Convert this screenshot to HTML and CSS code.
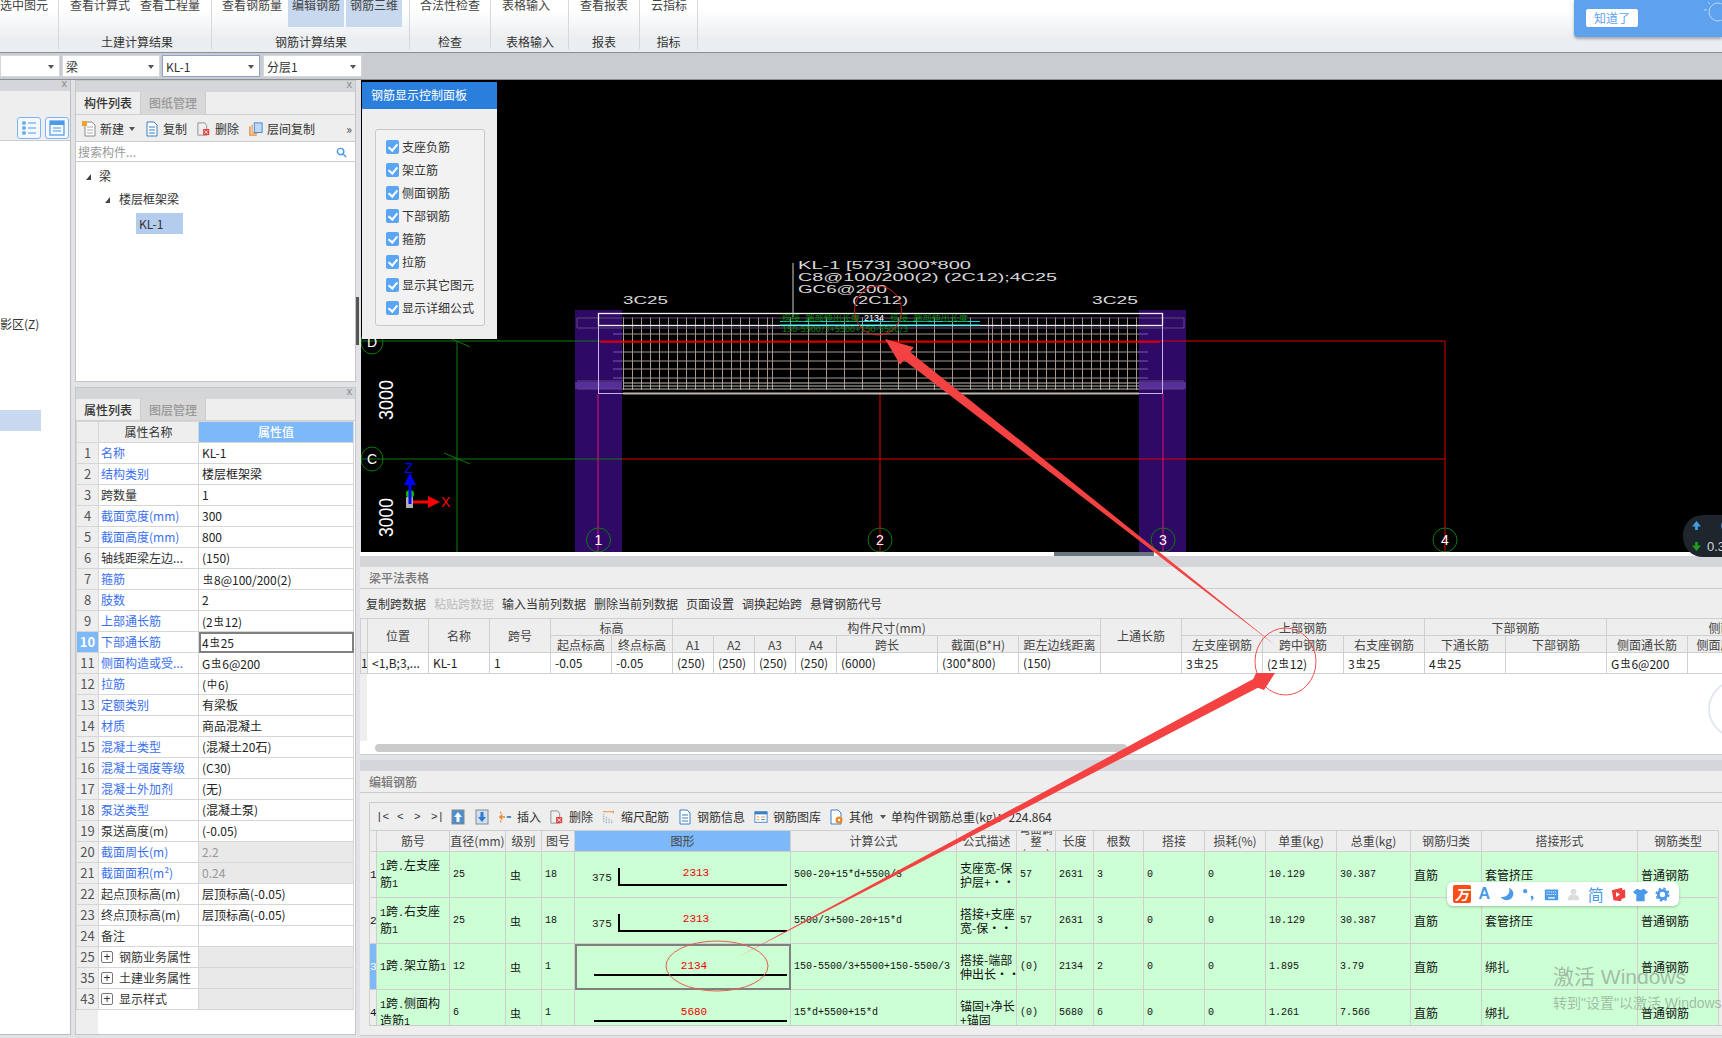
FILE: index.html
```html
<!DOCTYPE html>
<html lang="zh-CN">
<head>
<meta charset="utf-8">
<title>钢筋计算结果</title>
<link rel="stylesheet" href="styles.css">
</head>
<body>
<div class="app">
  <header class="ribbon">
    <div class="group g1"><div class="btns"><span class="rb">选中图元</span></div><div class="glabel"></div></div>
    <div class="group g2"><div class="btns"><span class="rb">查看计算式</span><span class="rb">查看工程量</span></div><div class="glabel">土建计算结果</div></div>
    <div class="group g3"><div class="btns"><span class="rb">查看钢筋量</span><span class="rb on">编辑钢筋</span><span class="rb on">钢筋三维</span></div><div class="glabel">钢筋计算结果</div></div>
    <div class="group g4"><div class="btns"><span class="rb">合法性检查</span></div><div class="glabel">检查</div></div>
    <div class="group g5"><div class="btns"><span class="rb">表格输入</span></div><div class="glabel">表格输入</div></div>
    <div class="group g6"><div class="btns"><span class="rb">查看报表</span></div><div class="glabel">报表</div></div>
    <div class="group g7"><div class="btns"><span class="rb">云指标</span></div><div class="glabel">指标</div></div>
  </header>
  <div class="ddbar">
    <div class="dd dd1"></div>
    <div class="dd">梁</div>
    <div class="dd active">KL-1</div>
    <div class="dd dd4">分层1</div>
  </div>

  <main class="main">
    <aside class="stub">
      <div class="phead"><span class="px">x</span></div>
      <div class="stub-tools">
        <span class="viewbtn"><svg viewBox="0 0 22 20" width="22" height="20"><g fill="none" stroke="#4a9ae8" stroke-width="1.2"><rect x="5" y="4" width="2" height="2"/><rect x="5" y="9" width="2" height="2"/><rect x="5" y="14" width="2" height="2"/><path d="M10 5h8M10 10h8M10 15h8"/></g></svg></span>
        <span class="viewbtn"><svg viewBox="0 0 22 20" width="22" height="20"><rect x="4" y="3" width="14" height="14" fill="none" stroke="#4a9ae8" stroke-width="1.2"/><rect x="4" y="3" width="14" height="4" fill="#4a9ae8"/><path d="M7 10h8M7 13h8" stroke="#4a9ae8" stroke-width="1.2"/></svg></span>
      </div>
      <div class="stub-body">
        <div class="stub-text">影区(Z)</div>
        <div class="stub-row"></div>
      </div>
    </aside>

    <section class="mid">
      <div class="panel pa">
        <div class="phead"><span class="px">x</span></div>
        <div class="tabs"><span class="tab on">构件列表</span><span class="tab">图纸管理</span></div>
        <div class="ptools">
          <svg class="ic i1" viewBox="0 0 14 16"><path d="M3 1h7l3 3v11H3z" fill="#fff" stroke="#888"/><path d="M5 6h6M5 9h6M5 12h6" stroke="#aaa"/><rect x="0" y="0" width="5" height="5" fill="#f4a030"/></svg><span class="tl">新建</span><span class="caret-d"></span>
          <svg class="ic i2" viewBox="0 0 14 16"><path d="M2 1h7l3 3v11H2z" fill="#fff" stroke="#3b7fc4"/><path d="M4 6h6M4 9h6M4 12h6" stroke="#3b7fc4"/></svg><span class="tl">复制</span>
          <svg class="ic i3" viewBox="0 0 16 16"><path d="M1 1h8l2 3v11H1z" fill="#eee" stroke="#888"/><rect x="7" y="8" width="7" height="7" fill="#e04040"/><path d="M8.5 9.5l4 4M12.5 9.5l-4 4" stroke="#fff"/></svg><span class="tl">删除</span>
          <svg class="ic i4" viewBox="0 0 16 16"><path d="M1 5v10h8" fill="none" stroke="#e8872a" stroke-width="1.5"/><path d="M3.500 3v10h6" fill="none" stroke="#e8872a"/><rect x="6" y="1" width="9" height="11" fill="#bcd8f6" stroke="#3b7fc4"/></svg><span class="tl">层间复制</span>
          <span class="more">»</span>
        </div>
        <div class="psearch"><span>搜索构件...</span><svg viewBox="0 0 12 12" width="11" height="11"><circle cx="5" cy="5" r="3.500" fill="none" stroke="#4a9ae8" stroke-width="1.600"/><path d="M8 8l3 3" stroke="#4a9ae8" stroke-width="1.600"/></svg></div>
        <ul class="tree">
          <li class="t1"><i class="tc"></i>梁</li>
          <li class="t2"><i class="tc"></i>楼层框架梁</li>
          <li class="t3"><span>KL-1</span></li>
        </ul>
      </div>

      <div class="panel pb">
        <div class="phead"><span class="px">x</span></div>
        <div class="tabs"><span class="tab on">属性列表</span><span class="tab">图层管理</span></div>
        <div class="propwrap">
          <table class="prop">
            <colgroup><col class="c0"><col class="c1"><col class="c2"></colgroup>
            <tr class="ph"><th></th><th>属性名称</th><th class="blue">属性值</th></tr>
            <tr><th>1</th><td class="lk">名称</td><td>KL-1</td></tr>
            <tr><th>2</th><td class="lk">结构类别</td><td>楼层框架梁</td></tr>
            <tr><th>3</th><td>跨数量</td><td>1</td></tr>
            <tr><th>4</th><td class="lk">截面宽度(mm)</td><td>300</td></tr>
            <tr><th>5</th><td class="lk">截面高度(mm)</td><td>800</td></tr>
            <tr><th>6</th><td>轴线距梁左边...</td><td>(150)</td></tr>
            <tr><th>7</th><td class="lk">箍筋</td><td><span class="bar">虫</span>8@100/200(2)</td></tr>
            <tr><th>8</th><td class="lk">肢数</td><td>2</td></tr>
            <tr><th>9</th><td class="lk">上部通长筋</td><td>(2<span class="bar">虫</span>12)</td></tr>
            <tr><th class="blue">10</th><td class="lk">下部通长筋</td><td class="act">4<span class="bar">虫</span>25</td></tr>
            <tr><th>11</th><td class="lk">侧面构造或受...</td><td>G<span class="bar">虫</span>6@200</td></tr>
            <tr><th>12</th><td class="lk">拉筋</td><td>(<span class="bar">中</span>6)</td></tr>
            <tr><th>13</th><td class="lk">定额类别</td><td>有梁板</td></tr>
            <tr><th>14</th><td class="lk">材质</td><td>商品混凝土</td></tr>
            <tr><th>15</th><td class="lk">混凝土类型</td><td>(混凝土20石)</td></tr>
            <tr><th>16</th><td class="lk">混凝土强度等级</td><td>(C30)</td></tr>
            <tr><th>17</th><td class="lk">混凝土外加剂</td><td>(无)</td></tr>
            <tr><th>18</th><td class="lk">泵送类型</td><td>(混凝土泵)</td></tr>
            <tr><th>19</th><td>泵送高度(m)</td><td>(-0.05)</td></tr>
            <tr><th>20</th><td class="lk">截面周长(m)</td><td class="ro">2.2</td></tr>
            <tr><th>21</th><td class="lk">截面面积(m²)</td><td class="ro">0.24</td></tr>
            <tr><th>22</th><td>起点顶标高(m)</td><td>层顶标高(-0.05)</td></tr>
            <tr><th>23</th><td>终点顶标高(m)</td><td>层顶标高(-0.05)</td></tr>
            <tr><th>24</th><td>备注</td><td></td></tr>
            <tr><th>25</th><td><i class="plus">+</i>钢筋业务属性</td><td class="ro"></td></tr>
            <tr><th>35</th><td><i class="plus">+</i>土建业务属性</td><td class="ro"></td></tr>
            <tr><th>43</th><td><i class="plus">+</i>显示样式</td><td class="ro"></td></tr>
          </table>
        </div>
      </div>
    </section>

    <div class="split"><span class="grip"></span></div>

    <section class="right">
      <div class="viewport">
        <svg class="cad" viewBox="361 80 1361 472" width="1361" height="472">
          <defs>
            <pattern id="v9" x="623" y="317" width="9" height="80" patternUnits="userSpaceOnUse"><rect width="1" height="80" fill="#a5978f"/></pattern>
            <pattern id="v18" x="772" y="317" width="18" height="80" patternUnits="userSpaceOnUse"><rect width="1" height="80" fill="#a5978f"/></pattern>
          </defs>
          <!-- columns -->
          <rect x="575" y="310" width="47" height="242" fill="#2e0a66"/>
          <rect x="1139" y="310" width="47" height="242" fill="#2e0a66"/>
          <!-- axes -->
          <path d="M361 341H600M361 459H622M457 341V552" stroke="#0c7a0c" fill="none"/>
          <path d="M452 339L470 347M444 453L470 464" stroke="#0c7a0c" fill="none"/>
          <path d="M600 341H1445V552M622 459H1445M880 394V552" stroke="#e00000" fill="none"/>
          <path d="M598 394V552M1163 394V552" stroke="#e0107a" fill="none"/>
          <!-- rebar grid -->
          <rect x="623" y="317" width="149" height="73" fill="url(#v9)"/>
          <rect x="772" y="317" width="218" height="73" fill="url(#v18)"/>
          <rect x="990" y="317" width="149" height="73" fill="url(#v9)"/>
          <path d="M623 334H1139M623 352H1139M623 361H1139M623 369H1139M623 378H1139" stroke="#a5978f" fill="none"/>
          <path d="M623 383H1139M623 386H1139M623 389H1139" stroke="#c0b8b0" fill="none"/>
          <path d="M613 334H623M613 352H623M613 361H623M613 369H623M613 378H623M1139 334H1148M1139 352H1148M1139 361H1148M1139 369H1148M1139 378H1148" stroke="#7a56c0" fill="none"/>
          <path d="M600 342H1160" stroke="#e00000" stroke-width="1.500" fill="none"/>
          <path d="M577 318H1184V328H577ZM577 381H623M1139 381H1184M577 389H623M1139 389H1184" stroke="#5c4a78" fill="none"/>
          <rect x="575" y="382" width="47" height="7" fill="#6a3fb0" opacity=".7"/>
          <rect x="1139" y="382" width="47" height="7" fill="#6a3fb0" opacity=".7"/>
          <rect x="598.500" y="313.500" width="564" height="80" stroke="#c6b4ec" fill="none"/>
          <path d="M623 393.500H1139" stroke="#bdb6ae" stroke-width="2"/>
          <rect x="598.500" y="313.500" width="564" height="12" stroke="#eeeeee" stroke-width="1.300" fill="none"/>
          <!-- labels -->
          <path d="M793 263V317" stroke="#cfcfcf" fill="none"/>
          <path d="M780 321.500H980M780 325H980" stroke="#00e0e0" fill="none"/>
          <g class="gtxt">
            <text x="782" y="321" textLength="78" lengthAdjust="spacingAndGlyphs">搭接_端部伸出长度</text>
            <text x="890" y="321" textLength="78" lengthAdjust="spacingAndGlyphs">搭接_端部伸出长度</text>
            <text x="782" y="332" textLength="126" lengthAdjust="spacingAndGlyphs">150-5500/3+5500+150-5500/3</text>
          </g>
          <text class="wtxt sm" x="864" y="321" textLength="20" lengthAdjust="spacingAndGlyphs">2134</text>
          <g class="wtxt">
            <text x="798" y="269" textLength="173" lengthAdjust="spacingAndGlyphs">KL-1 [573] 300*800</text>
            <text x="798" y="281" textLength="259" lengthAdjust="spacingAndGlyphs">C8@100/200(2) (2C12);4C25</text>
            <text x="798" y="293" textLength="89" lengthAdjust="spacingAndGlyphs">GC6@200</text>
            <text x="623" y="304" textLength="45" lengthAdjust="spacingAndGlyphs">3C25</text>
            <text x="852" y="304" textLength="56" lengthAdjust="spacingAndGlyphs">(2C12)</text>
            <text x="1092" y="304" textLength="46" lengthAdjust="spacingAndGlyphs">3C25</text>
          </g>
          <g class="dim">
            <text transform="translate(393 420) rotate(-90)" textLength="40" lengthAdjust="spacingAndGlyphs">3000</text>
            <text transform="translate(393 537) rotate(-90)" textLength="39" lengthAdjust="spacingAndGlyphs">3000</text>
          </g>
          <!-- axis bubbles -->
          <g class="bub">
            <ellipse cx="372" cy="342" rx="11" ry="12"/>
            <ellipse cx="372" cy="459" rx="11" ry="12"/>
            <ellipse cx="598.500" cy="540" rx="12" ry="12"/>
            <ellipse cx="880" cy="540" rx="12" ry="12"/>
            <ellipse cx="1163" cy="540" rx="12" ry="12"/>
            <ellipse cx="1445" cy="540" rx="12" ry="12"/>
          </g>
          <g class="bubt">
            <text x="372" y="347">D</text><text x="372" y="464">C</text>
            <text x="598.500" y="545">1</text><text x="880" y="545">2</text>
            <text x="1163" y="545">3</text><text x="1445" y="545">4</text>
          </g>
          <!-- gizmo -->
          <rect x="406" y="497" width="7" height="11" fill="#b0b0b0"/>
          <circle cx="410" cy="494" r="4" fill="#11c011"/>
          <path d="M410 504V481" stroke="#0000ff" stroke-width="3"/>
          <path d="M410 473l6 12h-12z" fill="#0000ff"/>
          <path d="M413 502H430" stroke="#ff0000" stroke-width="3"/>
          <path d="M440 502l-12-6v12z" fill="#ff0000"/>
          <text class="gz zb" x="404.500" y="473">Z</text>
          <text class="gz xr" x="441" y="507">X</text>
        </svg>

        <div class="ctrl">
          <div class="ctrl-head">钢筋显示控制面板</div>
          <div class="ctrl-body">
            <ul class="ctrl-box">
              <li><i class="chk"></i>支座负筋</li>
              <li><i class="chk"></i>架立筋</li>
              <li><i class="chk"></i>侧面钢筋</li>
              <li><i class="chk"></i>下部钢筋</li>
              <li><i class="chk"></i>箍筋</li>
              <li><i class="chk"></i>拉筋</li>
              <li><i class="chk"></i>显示其它图元</li>
              <li><i class="chk"></i>显示详细公式</li>
            </ul>
          </div>
        </div>
      </div>
      <div class="strip"><span class="handle"></span></div>

      <div class="tpanel t-one">
        <div class="phead"></div>
        <div class="ttitle">梁平法表格</div>
        <div class="ttools">
          <span>复制跨数据</span><span class="dis">粘贴跨数据</span><span>输入当前列数据</span><span>删除当前列数据</span><span>页面设置</span><span>调换起始跨</span><span>悬臂钢筋代号</span>
        </div>
        <div class="t1wrap">
          <table class="grid beam">
            <colgroup>
              <col class="w7"><col class="w61"><col class="w61"><col class="w61"><col class="w61"><col class="w61">
              <col class="w41"><col class="w41"><col class="w41"><col class="w41"><col class="w101">
              <col class="w81"><col class="w82"><col class="w81"><col class="w81"><col class="w81"><col class="w81"><col class="w81">
              <col class="w101"><col class="w81"><col class="w90"><col class="w81">
            </colgroup>
            <tr class="r17">
              <th rowspan="2"></th><th rowspan="2">位置</th><th rowspan="2">名称</th><th rowspan="2">跨号</th>
              <th colspan="2">标高</th><th colspan="7">构件尺寸(mm)</th>
              <th rowspan="2">上通长筋</th><th colspan="3">上部钢筋</th><th colspan="2">下部钢筋</th><th colspan="3">侧面钢筋</th>
            </tr>
            <tr class="r17">
              <th>起点标高</th><th>终点标高</th><th>A1</th><th>A2</th><th>A3</th><th>A4</th><th>跨长</th><th>截面(B*H)</th><th>距左边线距离</th>
              <th>左支座钢筋</th><th>跨中钢筋</th><th>右支座钢筋</th><th>下通长筋</th><th>下部钢筋</th><th>侧面通长筋</th><th>侧面原位钢筋</th><th>拉筋</th>
            </tr>
            <tr class="r21">
              <td class="n">1</td><td>&lt;1,B;3,...</td><td>KL-1</td><td>1</td><td>-0.05</td><td>-0.05</td><td>(250)</td><td>(250)</td><td>(250)</td><td>(250)</td><td>(6000)</td><td>(300*800)</td><td>(150)</td><td></td>
              <td>3<span class="bar">虫</span>25</td><td>(2<span class="bar">虫</span>12)</td><td>3<span class="bar">虫</span>25</td><td>4<span class="bar">虫</span>25</td><td></td><td>G<span class="bar">虫</span>6@200</td><td></td><td></td>
            </tr>
          </table>
        </div>
        <div class="scroll"><span class="thumb"></span></div>
      </div>

      <div class="tpanel t-two">
        <div class="phead"></div>
        <div class="ttitle">编辑钢筋</div>
        <div class="t2area">
          <div class="t2tools">
            <span class="nav">|&lt;</span><span class="nav">&lt;</span><span class="nav">&gt;</span><span class="nav">&gt;|</span>
            <svg class="ic2" viewBox="0 0 14 16"><rect x="1" y="1" width="12" height="14" fill="#4a8ed0" stroke="#888"/><path d="M7 3l4 5H8.500v5h-3V8H3z" fill="#fff"/></svg>
            <svg class="ic2" viewBox="0 0 14 16"><rect x="1" y="1" width="12" height="14" fill="#cfe0f4" stroke="#888"/><path d="M7 13l4-5H8.500V3h-3v5H3z" fill="#2f78cc"/></svg>
            <span class="it"><svg class="ic2" viewBox="0 0 16 16"><path d="M2 8h6M5 5L2 8l3 3" stroke="#e8872a" stroke-width="1.500" fill="none"/><path d="M3 2v2M3 12v2" stroke="#e8872a" stroke-width="1.500"/><path d="M10 8h5" stroke="#3b7fc4" stroke-width="2"/></svg>插入</span>
            <span class="it"><svg class="ic2" viewBox="0 0 16 16"><path d="M1 1h8l2 3v11H1z" fill="#eee" stroke="#888"/><rect x="7" y="8" width="7" height="7" fill="#e04040"/><path d="M8.500 9.500l4 4M12.500 9.500l-4 4" stroke="#fff"/></svg>删除</span>
            <span class="it"><svg class="ic2" viewBox="0 0 16 16"><path d="M1 2h12M13 1v3" stroke="#e8872a" fill="none"/><path d="M2 5v10M5 8v7M8 10v5M11 12v3" stroke="#5a7fa8" stroke-dasharray="1 1" fill="none"/></svg>缩尺配筋</span>
            <span class="it"><svg class="ic2" viewBox="0 0 14 16"><path d="M2 1h7l3 3v11H2z" fill="#fff" stroke="#3b7fc4"/><path d="M4 6h6M4 9h6M4 12h6" stroke="#3b7fc4"/></svg>钢筋信息</span>
            <span class="it"><svg class="ic2" viewBox="0 0 16 16"><rect x="1" y="2" width="14" height="12" fill="#fff" stroke="#3b7fc4"/><rect x="1" y="2" width="14" height="3" fill="#3b7fc4"/><path d="M3 8h3M8 8h5M3 11h3" stroke="#e8872a"/><path d="M8 11h5" stroke="#3b7fc4"/></svg>钢筋图库</span>
            <span class="it"><svg class="ic2" viewBox="0 0 14 16"><path d="M1 1h7l3 3v11H1z" fill="#fff" stroke="#3b7fc4"/><circle cx="9" cy="11" r="3.500" fill="#e8872a"/><circle cx="9" cy="11" r="1.200" fill="#fff"/></svg>其他<span class="caret-d"></span></span>
            <span class="sum">单构件钢筋总重(kg)：224.864</span>
          </div>
          <div class="t2wrap">
            <table class="grid rebar">
              <colgroup>
                <col class="w7"><col class="x73"><col class="x56"><col class="x36"><col class="x33"><col class="x216"><col class="x166"><col class="x60"><col class="x39"><col class="x38"><col class="x50"><col class="w61"><col class="w61"><col class="x71"><col class="x74"><col class="x71"><col class="x156"><col class="w81">
              </colgroup>
              <tr class="r21 thead">
                <th></th><th>筋号</th><th>直径(mm)</th><th>级别</th><th>图号</th><th class="blue">图形</th><th>计算公式</th><th>公式描述</th><th><div class="clip">弯曲调整(mm)</div></th><th>长度</th><th>根数</th><th>搭接</th><th>损耗(%)</th><th>单重(kg)</th><th>总重(kg)</th><th>钢筋归类</th><th>搭接形式</th><th>钢筋类型</th>
              </tr>
              <tr class="r46">
                <td class="rn">1</td><td class="nm"><b>1</b>跨<b>.</b>左支座<br>筋<b>1</b></td><td class="m">25</td><td class="lv">虫</td><td class="m">18</td>
                <td class="sh"><svg viewBox="0 0 216 45" width="216" height="45"><text class="dimt" x="17" y="29">375</text><path d="M44 16V33H212" class="ln"/><text class="redt" x="121" y="24">2313</text></svg></td>
                <td class="m">500-20+15*d+5500/3</td><td class="nm">支座宽-保<br>护层+···</td><td class="m">57</td><td class="m">2631</td><td class="m">3</td><td class="m">0</td><td class="m">0</td><td class="m">10.129</td><td class="m">30.387</td><td>直筋</td><td>套管挤压</td><td>普通钢筋</td>
              </tr>
              <tr class="r46">
                <td class="rn">2</td><td class="nm"><b>1</b>跨<b>.</b>右支座<br>筋<b>1</b></td><td class="m">25</td><td class="lv">虫</td><td class="m">18</td>
                <td class="sh"><svg viewBox="0 0 216 45" width="216" height="45"><text class="dimt" x="17" y="29">375</text><path d="M44 16V33H212" class="ln"/><text class="redt" x="121" y="24">2313</text></svg></td>
                <td class="m">5500/3+500-20+15*d</td><td class="nm">搭接+支座<br>宽-保···</td><td class="m">57</td><td class="m">2631</td><td class="m">3</td><td class="m">0</td><td class="m">0</td><td class="m">10.129</td><td class="m">30.387</td><td>直筋</td><td>套管挤压</td><td>普通钢筋</td>
              </tr>
              <tr class="r46">
                <td class="rn cur">3</td><td class="nm"><b>1</b>跨<b>.</b>架立筋<b>1</b></td><td class="m">12</td><td class="lv">虫</td><td class="m">1</td>
                <td class="sh act"><svg viewBox="0 0 216 45" width="216" height="45"><path d="M19 31H212" class="ln"/><text class="redt" x="119" y="25">2134</text></svg></td>
                <td class="m">150-5500/3+5500+150-5500/3</td><td class="nm">搭接-端部<br>伸出长···</td><td class="m">(0)</td><td class="m">2134</td><td class="m">2</td><td class="m">0</td><td class="m">0</td><td class="m">1.895</td><td class="m">3.79</td><td>直筋</td><td>绑扎</td><td>普通钢筋</td>
              </tr>
              <tr class="r46">
                <td class="rn">4</td><td class="nm"><b>1</b>跨<b>.</b>侧面构<br>造筋<b>1</b></td><td class="m">6</td><td class="lv">虫</td><td class="m">1</td>
                <td class="sh"><svg viewBox="0 0 216 45" width="216" height="45"><path d="M19 31H212" class="ln"/><text class="redt" x="119" y="25">5680</text></svg></td>
                <td class="m">15*d+5500+15*d</td><td class="nm">锚固+净长<br>+锚固</td><td class="m">(0)</td><td class="m">5680</td><td class="m">6</td><td class="m">0</td><td class="m">0</td><td class="m">1.261</td><td class="m">7.566</td><td>直筋</td><td>绑扎</td><td>普通钢筋</td>
              </tr>
            </table>
          </div>
        </div>
      </div>
    </section>
  </main>

  <!-- floating things that lie over the app -->
  <div class="tip"><span class="tipbtn">知道了</span><svg class="bulb" viewBox="0 0 20 30" width="20" height="30"><circle cx="16" cy="12" r="9" fill="none" stroke="#bcd8f8" stroke-width="1"/><path d="M2 10h3M6 2l2 2" stroke="#bcd8f8"/></svg></div>

  <div class="speed">
    <div class="sp"><svg viewBox="0 0 10 10" width="9" height="9"><path d="M5 0l5 6H6.500v4h-3V6H0z" fill="#3fa0e8"/></svg><span class="spv one">0</span></div>
    <div class="sp"><svg viewBox="0 0 10 10" width="9" height="9"><path d="M5 10l5-6H6.500V0h-3v4H0z" fill="#1aa01a"/></svg><span class="spv">0.3</span></div>
  </div>

  <div class="ball"></div>

  <div class="ime">
    <span class="ime-logo">万</span>
    <span class="ime-a">A</span>
    <svg viewBox="0 0 18 18"><path d="M12 1c2 6-2 12-10 11 3 5 13 6 15-2 1-4-1-7-5-9z" fill="#4a9ae8"/></svg>
    <svg viewBox="0 0 18 18"><circle cx="5" cy="5" r="2.500" fill="#4a9ae8"/><path d="M12 11c2-1 3 0 3 2s-2 4-4 4c1-1 2-2 2-3-1 0-2-2-1-3z" fill="#4a9ae8"/></svg>
    <svg viewBox="0 0 18 18"><rect x="1" y="3" width="16" height="13" rx="1" fill="#4a9ae8"/><path d="M3 6h12M3 9h12" stroke="#fff" stroke-dasharray="1.500 1" fill="none"/><path d="M5 13h8" stroke="#fff" stroke-width="1.500"/></svg>
    <svg viewBox="0 0 18 18"><circle cx="9" cy="5.500" r="3.500" fill="#dcdcdc"/><path d="M2 16c0-5 3-7 7-7s7 2 7 7z" fill="#dcdcdc"/></svg>
    <span class="ime-j">简</span>
    <svg viewBox="0 0 18 18"><path d="M1 4l12-3 1 3 3-1 0 10-4 1-1 3-9-1z" fill="#f04040"/><path d="M6 6l5 3-5 3z" fill="#fff"/></svg>
    <svg viewBox="0 0 18 18"><path d="M5 2l4 2 4-2 5 4-3 3-1-1v9H4V8L3 9 0 6z" fill="#4a9ae8"/></svg>
    <svg viewBox="0 0 18 18"><circle cx="9" cy="9" r="5" fill="none" stroke="#4a9ae8" stroke-width="3.500"/><circle cx="9" cy="9" r="7.500" fill="none" stroke="#4a9ae8" stroke-width="2" stroke-dasharray="3 2.900"/></svg>
  </div>

  <div class="wm"><div class="wm1">激活 Windows</div><div class="wm2">转到"设置"以激活 Windows。</div></div>

  <svg class="annot" viewBox="0 0 1722 1038" width="1722" height="1038">
    <ellipse cx="878" cy="310.500" rx="23.500" ry="24.500" fill="none" stroke="#cc2222"/>
    <ellipse cx="1285.500" cy="661.500" rx="30.500" ry="33.500" fill="none" stroke="#f45050"/>
    <ellipse cx="717" cy="966" rx="51" ry="25" fill="none" stroke="#e06050"/>
    <polygon points="885,339 913.800,347.300 910,352 1275,645 904,360 900.200,364.700" fill="#f44242"/>
    <polygon points="1275,673 1256,673 1253.300,678.900 736,958 1257.900,687.700 1264,690" fill="#f44242"/>
  </svg>
</div>
</body>
</html>
```

FILE: styles.css
```css
*{box-sizing:border-box}
html,body{margin:0;padding:0}
body{width:1722px;height:1038px;overflow:hidden;background:#e2e3e6;font:12px/16px "Noto Sans CJK SC","Noto Sans",sans-serif;color:#333}
ul{margin:0;padding:0;list-style:none}
.app{position:relative;width:1722px;height:1038px;overflow:hidden}

/* ribbon */
.ribbon{display:flex;height:52px;background:linear-gradient(#fff 0,#fff 18%,#ebeef0 75%,#ebeef0 100%)}
.group{height:49px;border-right:1px solid #d6d9dc;display:flex;flex-direction:column}
.g1{width:63px;margin-left:-4px}
.g2{width:153px;padding-left:7px}
.g3{width:198px;padding-left:6px}
.g4{width:81px;padding-left:6px}
.g5{width:78px;padding-left:7px}
.g6{width:71px;padding-left:7px}
.g7{width:58px;padding-left:7px}
.btns{display:flex;gap:2px;height:27px;line-height:9px}
.rb{padding:0 4px;height:27px;color:#444;white-space:nowrap}
.rb.on{background:#c8d8ee}
.glabel{text-align:center;margin-top:7px;line-height:16px;color:#333}
.g2 .glabel{margin-left:-3px}
.g3 .glabel{margin-left:-5px}
.g4 .glabel,.g5 .glabel{margin-left:-6px}
.g6 .glabel,.g7 .glabel{margin-left:-7px}

/* dropdown bar */
.ddbar{height:28px;background:#c9ccd0;border-top:1px solid #8c9095;border-bottom:1px solid #8c9095;display:flex;align-items:center;gap:2px}
.dd{position:relative;width:98px;height:22px;background:#fff;padding:0 3px;line-height:21px;border:1px solid #d4d6da}
.dd::after{content:"";position:absolute;right:5px;top:9px;border:3px solid transparent;border-top:4px solid #555;border-bottom:0}
.dd1{width:60px}
.dd4{width:99px;margin-left:1px}
.dd.active{border-color:#8ca4cc}

/* layout */
.main{display:flex;height:958px}
.stub{width:71px;height:955px;margin-right:4px;display:flex;flex-direction:column;border-right:1px solid #bdbdbd;border-bottom:1px solid #bdbdbd}
.phead{height:11px;flex:none;background:#d4d6da;position:relative}
.px{position:absolute;right:3px;top:-4px;font-size:11px;line-height:14px;color:#888;font-family:"Liberation Sans",sans-serif}
.stub-tools{height:50px;background:#eeeeee;display:flex;justify-content:flex-end;align-items:flex-end;gap:4px;padding:0 1px 1px 0;border-bottom:1px solid #ccc}
.viewbtn{width:24px;height:22px;border:1px solid #7cb6f2;border-radius:3px;display:flex;align-items:center;justify-content:center;background:#f4f8fd}
.stub-body{flex:1;background:#fff}
.stub-text{margin-top:174px;line-height:18px;color:#333}
.stub-row{margin-top:77px;width:41px;height:21px;background:#c8d8ee}

.mid{width:281px;display:flex;flex-direction:column;gap:5px}
.panel{background:#fff;border:1px solid #c6c6c6;display:flex;flex-direction:column}
.pa{height:302px}
.pb{height:648px}
.tabs{height:23px;flex:none;background:#eeeeee;display:flex;border-bottom:1px solid #d0d0d0}
.pb .tabs{height:22px}
.tab{width:65px;line-height:22px;text-align:center;color:#999;background:#d8d8d8;font-weight:500;border-right:1px solid #ccc}
.tab.on{background:#eeeeee;color:#333}
.ptools{height:27px;flex:none;background:#eeeeee;display:flex;align-items:center;padding-top:2px;border-bottom:1px solid #ccc}
.ic{width:14px;height:16px;flex:none}
.i1{margin-left:6px}.i2{margin-left:10px}.i3{margin-left:10px}.i4{margin-left:10px}
.tl{margin-left:4px}
.caret-d{display:inline-block;margin-left:5px;border:3px solid transparent;border-top:4px solid #555;border-bottom:0}
.more{margin-left:auto;margin-right:3px;font-size:12px;line-height:12px;color:#444}
.psearch{height:20px;flex:none;display:flex;align-items:center;justify-content:space-between;padding:1px 8px 0 2px;color:#999;border-bottom:1px solid #ccc}
.tree{padding-top:3px;color:#333}
.tree li{height:23px;line-height:23px}
.tree li.t1{padding-left:10px;height:22px;line-height:22px}
.tree li.t2{padding-left:29px;height:25px}
.tc{display:inline-block;width:0;height:0;margin-right:8px;border-left:5px solid transparent;border-bottom:6px solid #444;vertical-align:1px}
.tree li.t2 .tc{margin-right:9px}
.tree li.t3{padding-left:60px;height:21px;margin-top:1px}
.t3 span{display:block;width:47px;height:21px;line-height:21px;padding-left:3px;background:#b4cdee}

.propwrap{flex:1;background:linear-gradient(90deg,#eeeeee 22px,#fff 22px)}
.prop{border-collapse:collapse;table-layout:fixed;width:277px;font-size:12px}
.c0{width:22px}.c1{width:100px}.c2{width:155px}
.prop tr{height:21px}
.prop th,.prop td{border:1px solid #d6d6d6;padding:0;white-space:nowrap;overflow:hidden}
.prop th{font-weight:400;background:#eeeeee;text-align:center;color:#555;font-size:13px}
.prop .ph th{font-size:12px;color:#333}
.prop td{padding-left:2px}
.prop td:last-child{padding-left:3px;color:#222}
.prop td.lk{color:#3a6ff0}
.prop th.blue{background:#7db8f8;color:#fff;font-weight:700}
.prop .ph th.blue{font-weight:500}
.prop td.act{outline:2px solid #808080;outline-offset:-2px}
.prop td.ro{background:#e9e9e9;color:#999}
.plus{display:inline-block;width:12px;height:12px;margin:0 6px 0 0;border:1px solid #777;border-radius:2px;font:12px/10px "Liberation Sans",sans-serif;text-align:center;vertical-align:1px}
.bar{font-size:10px;vertical-align:2px;margin:0 1px}

.split{width:4px;padding:217px 1px 0 0}
.grip{display:block;width:3px;height:48px;background:#555}

.right{width:1362px;display:flex;flex-direction:column}
.viewport{position:relative;height:472px;margin-left:1px;background:#000;overflow:hidden;flex:none}
.cad{display:block}
.wtxt text,.wtxt{font:10.500px "Liberation Sans",sans-serif;fill:#d8d8d8}
.wtxt.sm{font-size:9px;fill:#fff}
.gtxt text{font:8px "Noto Sans CJK SC",sans-serif;fill:#0c8a0c}
.dim text{font:20px "Liberation Sans",sans-serif;fill:#fff}
.bub ellipse{fill:none;stroke:#0c7a0c}
.bubt text{font:14px "Liberation Sans",sans-serif;fill:#fff;text-anchor:middle}
.gz{font:14px "Liberation Sans",sans-serif}
.zb{fill:#0000ff}
.xr{fill:#ff0000}

/* control panel */
.ctrl{position:absolute;left:1px;top:2px;width:135px;height:257px;background:#eeeeee}
.ctrl-head{height:27px;background:#2b7fdc;color:#fff;line-height:26px;padding-left:9px}
.ctrl-body{padding:20px 12px 0 13px}
.ctrl-box{height:197px;background:#f2f2f2;border:1px solid #c9c9c9;border-radius:3px;padding:5px 0 0 10px}
.ctrl-box li{height:23px;line-height:23px;display:flex;align-items:center;color:#333;white-space:nowrap}
.chk{position:relative;width:13px;height:14px;margin-right:3px;border-radius:2px;background:#5ba5f5;flex:none}
.chk::after{content:"";position:absolute;left:4px;top:2px;width:4px;height:7px;border:solid #fff;border-width:0 2px 2px 0;transform:rotate(40deg)}

.strip{height:4px;flex:none;background:#fff;padding-left:694px}
.handle{display:block;width:100px;height:4px;background:#6a7680}

/* lower panels */
.tpanel{display:flex;flex-direction:column;background:#eeeeee;flex:none;overflow:hidden}
.t-one{height:199px;border-bottom:1px solid #ccc;background:#fff}
.t-two{height:276px;margin-top:5px;border-bottom:1px solid #ccc}
.ttitle{height:22px;flex:none;background:#eeeeee;border-bottom:1px solid #ccc;padding-left:9px;line-height:21px;color:#777;font-weight:500}
.ttools{height:29px;flex:none;background:#eeeeee;display:flex;gap:8px;padding-left:6px;align-items:center;white-space:nowrap}
.ttools .dis{color:#bbb}
.t1wrap{height:123px;flex:none;overflow:hidden;background:linear-gradient(90deg,#eeeeee 7px,#fff 7px)}
.grid{border-collapse:collapse;table-layout:fixed;font-size:12px}
.beam{width:1498px}
.rebar{width:1349px}
.grid th,.grid td{border:1px solid #cfcfcf;padding:0;white-space:nowrap;overflow:hidden}
.grid th{font-weight:400;background:#eeeeee;text-align:center;color:#444}
.grid th.blue{background:#7db8f8;color:#fff}
.r17{height:17px}.r17 th{line-height:15px}
.r21{height:21px}
.r46{height:46px}
.beam td{padding-left:4px;color:#222}
.beam td.n{padding:0;background:#eeeeee}
.w7{width:7px}.w41{width:41px}.w61{width:61px}.w81{width:81px}.w82{width:82px}.w90{width:90px}.w101{width:101px}
.x33{width:33px}.x36{width:36px}.x38{width:38px}.x39{width:39px}.x50{width:50px}.x56{width:56px}.x60{width:60px}.x71{width:71px}.x73{width:73px}.x74{width:74px}.x156{width:156px}.x166{width:166px}.x216{width:216px}
.scroll{height:14px;flex:none;background:#fff;padding:3px 0 0 15px}
.thumb{display:block;width:752px;height:8px;background:#cbcbcb;border-radius:4px}

.t2area{flex:1;padding:9px 0 0 9px}
.t2tools{height:28px;display:flex;align-items:center;border-top:1px solid #ccc;border-left:1px solid #ccc;padding-left:6px;color:#333;white-space:nowrap}
.nav{font:11px "Liberation Mono",monospace;width:17px;flex:none}
.nav:first-child{width:21px}
.nav:nth-child(4){width:20px}
.ic2{width:14px;height:16px;flex:none}
svg.ic2+svg.ic2{margin-left:10px}
.it{display:inline-flex;align-items:center;gap:5px;margin-left:9px}
.it .caret-d{margin-left:2px}
.sum{margin-left:5px}
.t2wrap{height:196px;overflow:hidden;border-bottom:1px solid #ccc}
.rebar tr.thead th{color:#444}
.clip{height:20px;overflow:hidden;display:flex;align-items:center;justify-content:center;white-space:normal;line-height:12px;font-size:11px}
.rebar td{background:#ccffd4;padding-left:3px;color:#111;white-space:nowrap;line-height:14px}
.rebar td.rn{background:#eeeeee;padding:0;font:11px "Liberation Mono",monospace}
.rebar td.cur{background:#7db8f8;color:#fff}
.rebar td.sh{padding:0}
.rebar td.sh svg{display:block}
.rebar td.act{outline:2px solid #808080;outline-offset:-2px}
.rebar td.m{font:10px/14px "Liberation Mono",monospace;white-space:nowrap}
.rebar td.lv{padding-left:4px;font-size:11px}
.rebar td.nm b{font:10px/14px "Liberation Mono",monospace}
.dimt{font:11px "Liberation Mono",monospace;fill:#222}
.redt{font:11px "Liberation Mono",monospace;fill:#ee0000;text-anchor:middle}
.ln{fill:none;stroke:#000;stroke-width:2}

/* overlays */
.tip{position:absolute;left:1574px;top:0;width:148px;height:37px;background:#5ea2ef;border-radius:0 0 0 4px;box-shadow:0 2px 3px rgba(0,0,0,.3);padding:9px 0 0 12px;overflow:hidden}
.tipbtn{display:block;width:52px;height:18px;background:#fff;border-radius:2px;color:#5ea2ef;text-align:center;line-height:18px}
.bulb{position:absolute;right:0;top:0}
.speed{position:absolute;left:1683px;top:515px;width:60px;height:42px;border-radius:20px 0 0 20px;background:#1f252c;padding:0 0 0 9px}
.sp{display:flex;align-items:center;height:21px;color:#cfd6de;gap:6px}
.spv{font:13px "Liberation Sans",sans-serif}
.spv.one{margin-left:14px}
.ball{position:absolute;left:1708px;top:680px;width:58px;height:58px;border-radius:50%;background:#fff;border:2px solid #e4e8f4}
.ime{position:absolute;left:1447px;top:882px;width:232px;height:24px;background:#fff;border-radius:6px;box-shadow:0 1px 3px rgba(0,0,0,.25);display:flex;align-items:center;gap:4.300px;padding-left:6px;color:#4a9ae8}
.ime svg{flex:none;width:15px;height:15px;margin:0 1.500px}
.ime-logo{width:18px;height:18px;background:#fa4f14;border-radius:2px;color:#fff;font:italic 700 14px/18px "Noto Sans CJK SC",sans-serif;text-align:center;flex:none}
.ime-a{width:18px;text-align:center;font:700 16px/18px "Liberation Sans",sans-serif;flex:none}
.ime-j{width:18px;text-align:center;font-size:16px;line-height:18px;flex:none}
.wm{position:absolute;left:1553px;top:964px;color:rgba(120,120,120,.5);white-space:nowrap;font-family:"Liberation Sans","Noto Sans CJK SC",sans-serif}
.wm1{font-size:21px;line-height:26px}
.wm2{font-size:14px;line-height:20px;margin-top:3px}
.annot{position:absolute;left:0;top:0;pointer-events:none}
```
